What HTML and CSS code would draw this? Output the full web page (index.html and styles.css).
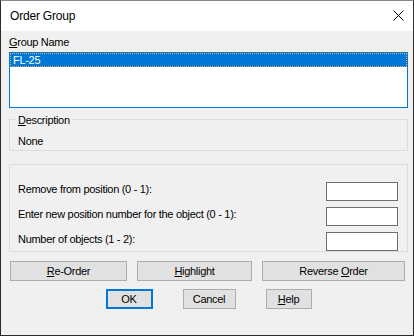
FILE: index.html
```html
<!DOCTYPE html>
<html>
<head>
<meta charset="utf-8">
<title>Order Group</title>
<link rel="stylesheet" href="styles.css">
</head>
<body>
<div class="window">
  <div class="titlebar">
    <span class="title">Order Group</span>
    <svg class="close" width="11" height="11" viewBox="0 0 11 11"><path d="M0.5 0.5 L10.5 10.5 M10.5 0.5 L0.5 10.5" stroke="#000" stroke-width="1" fill="none"/></svg>
  </div>
  <div class="content">
    <div class="label"><u>G</u>roup Name</div>
    <div class="listbox">
      <div class="item selected">FL-25</div>
    </div>
    <div class="group desc">
      <div class="legend"><u>D</u>escription</div>
      <div class="desc-text">None</div>
    </div>
    <div class="group fields">
      <div class="row"><span class="row-label">Remove from position (0 - 1):</span><input class="field" type="text"></div>
      <div class="row"><span class="row-label">Enter new position number for the object (0 - 1):</span><input class="field" type="text"></div>
      <div class="row"><span class="row-label">Number of objects (1 - 2):</span><input class="field" type="text"></div>
    </div>
    <div class="btnrow actions">
      <button class="btn w-reorder"><u>R</u>e-Order</button>
      <button class="btn w-highlight"><u>H</u>ighlight</button>
      <button class="btn w-reverse">Reverse <u>O</u>rder</button>
    </div>
    <div class="btnrow dialog">
      <button class="btn default w-ok">OK</button>
      <button class="btn w-cancel">Cancel</button>
      <button class="btn w-help"><u>H</u>elp</button>
    </div>
  </div>
</div>
</body>
</html>
```
FILE: styles.css
```css
html, body {
  margin: 0;
  padding: 0;
  background: #f0f0f0;
}
body {
  font-family: "Liberation Sans", Arial, sans-serif;
  font-size: 11px;
  letter-spacing: -0.3px;
  color: #000;
}
.window {
  width: 414px;
  height: 336px;
  box-sizing: border-box;
  border: 1px solid #2b2b2b;
  border-top-color: #8a8a8a;
  background: #f0f0f0;
  display: flex;
  flex-direction: column;
}
.titlebar {
  height: 30px;
  flex: none;
  background: #fff;
  display: flex;
  align-items: center;
  justify-content: space-between;
  padding: 0 9px;
}
.title {
  font-size: 12px;
  line-height: 14px;
  letter-spacing: -0.2px;
}
.close {
  display: block;
  margin-bottom: 2px;
}
.content {
  flex: 1;
  padding: 5px 5px 0 8px;
  display: flex;
  flex-direction: column;
}
.label {
  line-height: 13px;
  height: 13px;
}
u {
  text-decoration: underline;
  text-underline-offset: 1px;
}
.listbox {
  margin-top: 3px;
  height: 56px;
  box-sizing: border-box;
  border: 1px solid #0078d7;
  background: #fff;
}
.item {
  height: 14px;
  line-height: 14px;
  padding-left: 3px;
}
.item.selected {
  background: #0078d7;
  color: #fff;
  outline: 1px dotted #f2a552;
  outline-offset: -1px;
}
.group {
  box-sizing: border-box;
  border: 1px solid #dcdcdc;
}
.desc {
  margin-top: 11px;
  height: 32px;
}
.legend {
  width: fit-content;
  margin: -6px 0 0 6px;
  padding: 0 2px;
  background: #f0f0f0;
  line-height: 13px;
}
.desc-text {
  margin-top: 8px;
  padding-left: 8px;
  line-height: 13px;
}
.fields {
  margin-top: 13px;
  height: 88px;
  padding: 17px 9px 0 8px;
  display: flex;
  flex-direction: column;
  gap: 6px;
}
.row {
  height: 19px;
  display: flex;
  align-items: flex-start;
  justify-content: space-between;
}
.row-label {
  margin-top: 1px;
  line-height: 13px;
}
.field {
  width: 72px;
  height: 19px;
  box-sizing: border-box;
  border: 1px solid #6e6e6e;
  background: #fff;
  margin: 0;
  padding: 0 2px;
  font: inherit;
  outline: none;
}
.btnrow {
  display: flex;
}
.actions {
  margin-top: 9px;
  padding-left: 1px;
  gap: 10px;
}
.dialog {
  margin-top: 8px;
  justify-content: center;
  gap: 30px;
}
.btn {
  height: 20px;
  box-sizing: border-box;
  margin: 0;
  padding: 0;
  border: 1px solid #adadad;
  background: #e1e1e1;
  font: inherit;
  letter-spacing: -0.3px;
  color: #000;
  line-height: 16px;
  text-align: center;
}
.btn.default {
  border: 2px solid #0078d7;
}
.w-reorder { width: 117px; }
.w-highlight { width: 115px; }
.w-reverse { width: 143px; }
.w-ok { width: 47px; }
.w-cancel { width: 53px; }
.w-help { width: 46px; }
```
